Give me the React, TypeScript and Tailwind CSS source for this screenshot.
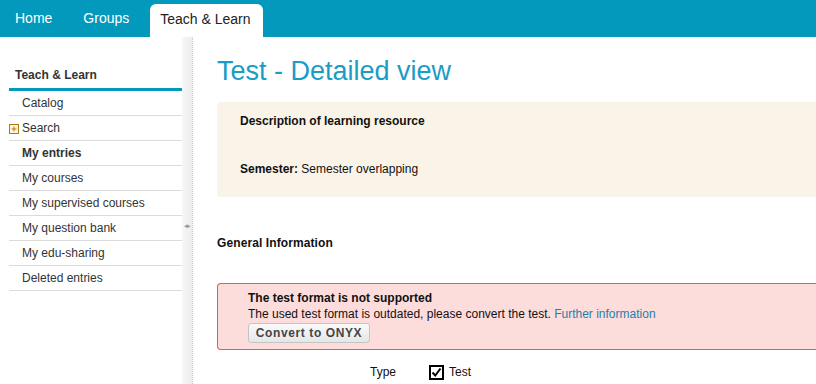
import React from 'react';

const font = { fontFamily: '"Liberation Sans", Arial, sans-serif' };

const sideItems = [
    { label: 'Catalog' },
    { label: 'Search', plus: true },
    { label: 'My entries', bold: true },
    { label: 'My courses' },
    { label: 'My supervised courses' },
    { label: 'My question bank' },
    { label: 'My edu-sharing' },
    { label: 'Deleted entries' },
];

function PlusBox() {
    return (
        <svg width="10" height="10" viewBox="0 0 10 10" className="mr-[3px] shrink-0">
            <rect x="0.5" y="0.5" width="9" height="9" fill="#fff8e0" stroke="#b07a10" />
            <path d="M2.5 5h5M5 2.5v5" stroke="#b07a10" strokeWidth="1" />
        </svg>
    );
}

export default function App() {
    return (
        <div className="w-[816px] h-[384px] overflow-hidden bg-white text-[#333]" style={font}>
            {/* top navigation */}
            <div className="h-[37px] bg-[#0299bd] flex items-end pl-[15px]">
                <a className="text-white text-[14px] leading-[37px] h-[37px] mr-[31px]">Home</a>
                <a className="text-white text-[14px] leading-[37px] h-[37px] mr-[21px]">Groups</a>
                <a className="bg-white text-[#222] text-[14px] h-[33px] leading-[31px] px-[10px] w-[113px] rounded-t-[6px]">
                    Teach &amp; Learn
                </a>
            </div>

            <div className="flex h-[347px]">
                {/* sidebar */}
                <div className="w-[182px] shrink-0 pt-[28px] pl-[9px]">
                    <div className="text-[12px] font-bold text-[#333] pl-[6px] h-[26px] leading-[20px] border-b-[3px] border-[#0299bd]">
                        Teach &amp; Learn
                    </div>
                    <ul className="text-[12px]">
                        {sideItems.map(item => (
                            <li
                                key={item.label}
                                className="h-[25px] flex items-center border-b border-[#dcdcdc] pl-[13px] relative"
                            >
                                {item.plus && (
                                    <span className="absolute left-0 top-[8px]">
                                        <PlusBox />
                                    </span>
                                )}
                                <span className={item.bold ? 'font-bold text-[#333]' : 'text-[#333]'}>{item.label}</span>
                            </li>
                        ))}
                    </ul>
                </div>

                {/* splitter */}
                <div className="w-[11px] shrink-0 bg-gradient-to-r from-[#f7f7f7] to-[#ececec] border-r border-dotted border-[#c8c8c8] flex items-center justify-center">
                    <span className="text-[7px] text-[#999] tracking-[-1px] mt-[32px]">◂▸</span>
                </div>

                {/* main content */}
                <div className="flex-1 pl-[24px] pt-[17px]">
                    <h1 className="text-[27px] text-[#1a9cc6] leading-[34px] mb-[14px]">Test - Detailed view</h1>

                    <div className="bg-[#faf3e8] rounded-l-[4px] h-[95px] pl-[23px] pt-[11px] text-[12px] text-[#111]">
                        <div className="font-bold leading-[16px]">Description of learning resource</div>
                        <div className="mt-[32px] leading-[16px]">
                            <span className="font-bold">Semester:</span> Semester overlapping
                        </div>
                    </div>

                    <div className="text-[12px] font-bold text-[#111] mt-[38px] leading-[16px] tracking-[0.1px]">
                        General Information
                    </div>

                    <div className="mt-[32px] h-[67px] bg-[#fddcdc] border border-r-0 border-[#e2642c] rounded-l-[4px] pl-[30px] pt-[6px] text-[12px] text-[#111]">
                        <div className="font-bold leading-[16px]">The test format is not supported</div>
                        <div className="leading-[17px]">
                            The used test format is outdated, please convert the test.{' '}
                            <a className="text-[#1e7fa8]">Further information</a>
                        </div>
                        <button className="h-[20px] w-[122px] rounded-[3px] border border-[#c4c4c4] bg-gradient-to-b from-[#fafafa] to-[#e6e6e6] text-[12px] font-bold text-[#444] tracking-[0.6px] leading-[18px]">
                            Convert to ONYX
                        </button>
                    </div>

                    <div className="flex items-center mt-[13px] text-[12px] text-[#111]">
                        <span className="ml-[153px] w-[59px]">Type</span>
                        <span className="w-[15px] h-[15px] border-2 border-black bg-white flex items-center justify-center mr-[5px]">
                            <svg width="11" height="11" viewBox="0 0 11 11">
                                <path d="M1.5 5.5l2.8 3 5.2-7" fill="none" stroke="#000" strokeWidth="2" />
                            </svg>
                        </span>
                        <span>Test</span>
                    </div>
                </div>
            </div>
        </div>
    );
}
